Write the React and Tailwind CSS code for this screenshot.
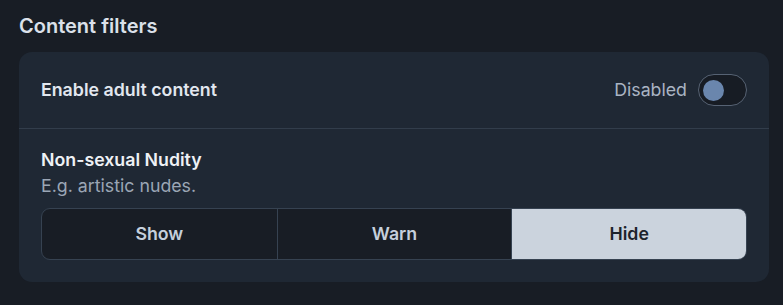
import { useState } from "react";

const options = ["Show", "Warn", "Hide"];

export default function App() {
  const [enabled, setEnabled] = useState(false);
  const [choice, setChoice] = useState("Hide");

  return (
    <div className="min-h-[305px] w-[783px] bg-[#181d25] px-[19px] pt-[11px] font-['Inter',sans-serif]">
      <h2 className="text-[20px] font-semibold leading-[30px] text-[#dbe1ea]">Content filters</h2>
      <div className="mt-[11px] w-[750px] rounded-[13px] bg-[#1f2834]">
        <div className="flex items-center justify-between px-[22px] py-[22px]">
          <span className="text-[17.75px] font-semibold leading-[26px] text-[#e2e7ef]">Enable adult content</span>
          <div className="flex items-center gap-[11px]">
            <span className="text-[17.75px] leading-[26px] text-[#aab4c3]">{enabled ? "Enabled" : "Disabled"}</span>
            <button
              onClick={() => setEnabled(!enabled)}
              className="flex h-[32px] w-[49px] items-center rounded-full border border-[#566273] bg-[#171c24] px-[4px]"
            >
              <span className="h-[21px] w-[21px] rounded-full bg-[#6a86ad]" />
            </button>
          </div>
        </div>
        <div className="h-px bg-[#323d4b]" />
        <div className="px-[22px] pt-[18px] pb-[22px]">
          <div className="text-[17.75px] font-semibold leading-[26px] text-[#eef1f5]">Non-sexual Nudity</div>
          <div className="text-[17.75px] leading-[26px] text-[#9ba6b5]">E.g. artistic nudes.</div>
          <div className="mt-[9px] grid h-[52px] grid-cols-3 overflow-hidden rounded-[9px] border border-[#364251] bg-[#181d25]">
            {options.map(function (opt, i) {
              const active = opt === choice;
              return (
                <button
                  key={opt}
                  onClick={() => setChoice(opt)}
                  className={
                    "text-[17.75px] font-semibold " +
                    (active ? "bg-[#cbd3dd] text-[#1d232c]" : "text-[#c5cfdc]") +
                    (i > 0 ? " border-l border-[#364251]" : "")
                  }
                >
                  {opt}
                </button>
              );
            })}
          </div>
        </div>
      </div>
    </div>
  );
}
